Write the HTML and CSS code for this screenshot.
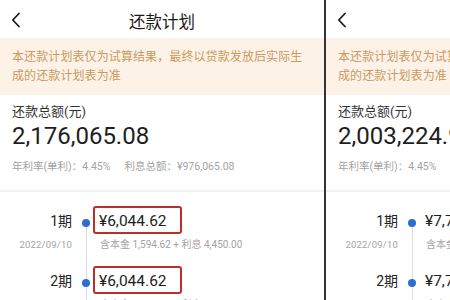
FILE: index.html
```html
<!DOCTYPE html>
<html lang="zh">
<head>
<meta charset="utf-8">
<link rel="stylesheet" href="styles.css">
</head>
<body>
<div class="screen">
  <section class="panel">
    <header class="topbar">
      <svg class="back" width="10" height="16" viewBox="0 0 10 16"><polyline points="8,1.5 1.8,8 8,14.5" fill="none" stroke="#1c1c1c" stroke-width="1.8" stroke-linecap="round" stroke-linejoin="round"/></svg>
      <h1 class="title">还款计划</h1>
      <span></span>
    </header>
    <div class="notice">本还款计划表仅为试算结果，最终以贷款发放后实际生成的还款计划表为准</div>
    <div class="summary">
      <div class="label">还款总额(元)</div>
      <div class="total">2,176,065.08</div>
      <div class="rate"><span>年利率(单利)：4.45%</span><span>利息总额：¥976,065.08</span></div>
    </div>
    <div class="timeline">
      <div class="row">
        <div class="side"><div class="period">1期</div><div class="date">2022/09/10</div></div>
        <div class="axis"><span class="dot"></span></div>
        <div class="main"><div class="amount boxed">¥6,044.62</div><div class="detail">含本金 1,594.62 + 利息 4,450.00</div></div>
      </div>
      <div class="row">
        <div class="side"><div class="period">2期</div><div class="date">2022/10/10</div></div>
        <div class="axis"><span class="dot"></span></div>
        <div class="main"><div class="amount boxed">¥6,044.62</div><div class="detail">含本金 1,600.53 + 利息 4,444.09</div></div>
      </div>
    </div>
  </section>
  <div class="divider"></div>
  <section class="panel">
    <header class="topbar">
      <svg class="back" width="10" height="16" viewBox="0 0 10 16"><polyline points="8,1.5 1.8,8 8,14.5" fill="none" stroke="#1c1c1c" stroke-width="1.8" stroke-linecap="round" stroke-linejoin="round"/></svg>
      <h1 class="title">还款计划</h1>
      <span></span>
    </header>
    <div class="notice">本还款计划表仅为试算结果，最终以贷款发放后实际生成的还款计划表为准</div>
    <div class="summary">
      <div class="label">还款总额(元)</div>
      <div class="total">2,003,224.97</div>
      <div class="rate"><span>年利率(单利)：4.45%</span><span>利息总额：¥803,224.97</span></div>
    </div>
    <div class="timeline">
      <div class="row">
        <div class="side"><div class="period">1期</div><div class="date">2022/09/10</div></div>
        <div class="axis"><span class="dot"></span></div>
        <div class="main"><div class="amount">¥7,783.33</div><div class="detail">含本金 3,333.33 + 利息 4,450.00</div></div>
      </div>
      <div class="row">
        <div class="side"><div class="period">2期</div><div class="date">2022/10/10</div></div>
        <div class="axis"><span class="dot"></span></div>
        <div class="main"><div class="amount">¥7,770.97</div><div class="detail">含本金 3,333.33 + 利息 4,437.64</div></div>
      </div>
    </div>
  </section>
</div>
</body>
</html>
```
FILE: styles.css
```css
* { box-sizing: border-box; margin: 0; padding: 0; }
html, body { width: 450px; height: 300px; overflow: hidden; background: #fff; }
body {
  font-family: Roboto, "Noto Sans CJK SC", sans-serif;
  color: #222;
}
.screen { display: flex; width: 450px; height: 300px; overflow: hidden; }
.panel { flex: 0 0 324px; width: 324px; background: #fff; overflow: hidden; }
.divider { flex: 0 0 2px; background: #333; }

.topbar {
  height: 38px;
  display: grid;
  grid-template-columns: 40px 1fr 40px;
  align-items: center;
}
.back { margin-left: 11px; margin-top: 2px; }
.title {
  text-align: center;
  font-size: 16.5px;
  font-weight: 400;
  color: #1a1a1a;
  margin-top: 4px;
  white-space: nowrap;
}

.notice {
  background: #fdf2e7;
  color: #c99a5e;
  font-size: 12px;
  line-height: 19px;
  letter-spacing: 0.1px;
  padding: 10px 18px 9px 12px;
  height: 57px;
}

.summary { padding: 8px 12px 15px; border-bottom: 2px solid #f2f2f2; }
.label { font-size: 13px; line-height: 18px; color: #333; }
.total { font-size: 24px; line-height: 26px; color: #1e1e1e; margin-top: 2px; white-space: nowrap; }
.rate {
  margin-top: 10px;
  font-size: 10.5px;
  line-height: 16px;
  color: #a3a3a3;
  display: flex;
  gap: 14px;
  white-space: nowrap;
}

.timeline { padding-top: 14px; }
.row { display: flex; height: 60px; }
.side { flex: 0 0 74px; text-align: right; padding-right: 2px; }
.period { font-size: 14px; line-height: 30px; color: #222; }
.date { font-size: 9.5px; line-height: 16px; color: #a3a3a3; margin-top: 1px; letter-spacing: 0.2px; }
.axis { flex: 0 0 19px; position: relative; }
.axis::after {
  content: "";
  position: absolute;
  left: 11.5px;
  top: 17px;
  bottom: -17px;
  width: 1px;
  background: #dcdcdc;
}
.dot {
  position: absolute;
  left: 8px;
  top: 13px;
  width: 8px;
  height: 8px;
  border-radius: 50%;
  background: #2c6fce;
  z-index: 1;
}
.main { white-space: nowrap; }
.amount {
  font-size: 15.5px;
  line-height: 24px;
  height: 28px;
  padding: 1px 0 0 4px;
  color: #1e1e1e;
  width: 89px;
  border: 2px solid transparent;
}
.amount.boxed { border-color: #b8302e; border-radius: 3px; }
.detail { font-size: 10px; line-height: 16px; color: #a3a3a3; padding-left: 7px; margin-top: 3px; }
```
